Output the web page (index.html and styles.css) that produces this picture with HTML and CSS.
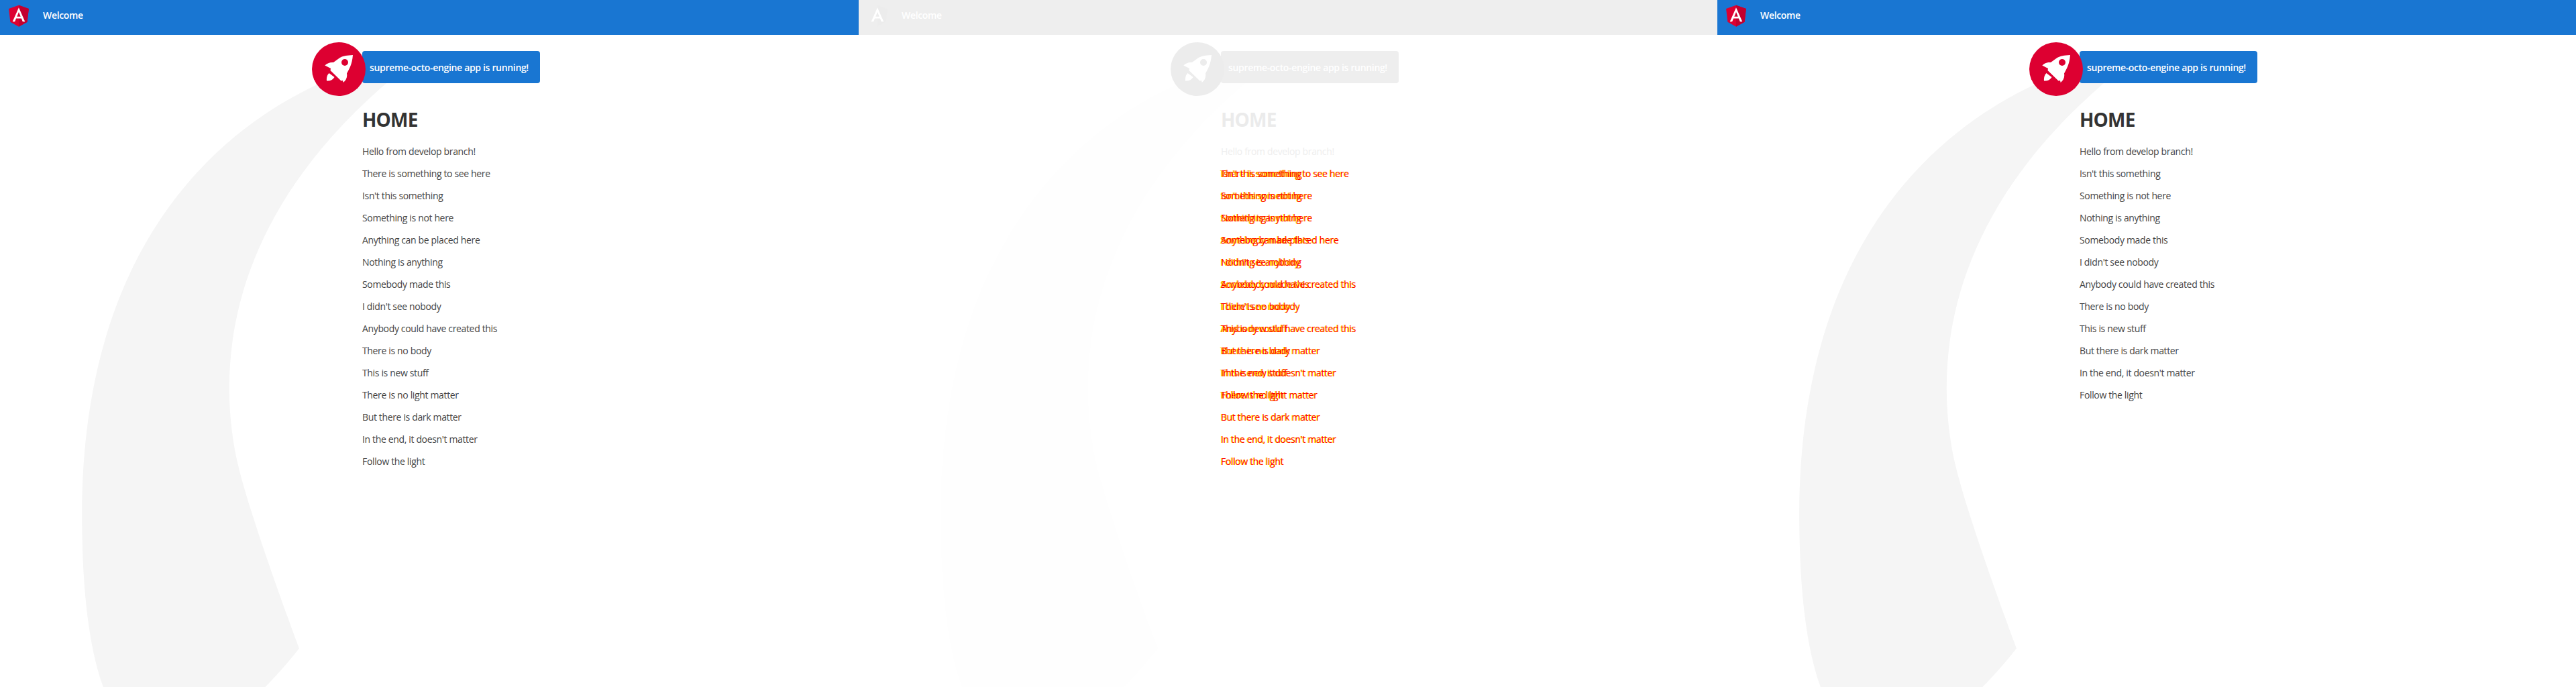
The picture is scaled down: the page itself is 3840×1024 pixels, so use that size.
FILE: index.html
```html
<!DOCTYPE html>
<html lang="en">
<head>
  <meta charset="UTF-8" />
  <title>Welcome</title>
  <link rel="stylesheet" href="styles.css">
</head>
<body>
  <svg class="defs" width="0" height="0">
    <defs>
      <g id="ng-logo">
        <polygon class="shield" points="125,30 31.9,63.2 46.1,186.3 125,230 203.9,186.3 218.1,63.2"/>
        <polygon class="shield-dark" points="125,30 125,230 203.9,186.3 218.1,63.2"/>
        <path class="logo-a" d="M125,52.1L66.8,182.6h21.7l11.7-29.2h49.4l11.7,29.2h21.7L125,52.1z M142,135.4H108l17-40.9L142,135.4z"/>
      </g>
      <path id="smoke" d="M644.6,141S143.02,215.537,147.049,870.207s342.774,201.755,342.774,201.755S404.659,847.213,388.815,762.2c-27.116-145.51-11.551-384.124,271.9-609.1C671.15,139.365,644.6,141,644.6,141Z" transform="translate(-147.025 -140.525)"/>
      <g id="rocket-ship">
        <circle class="rocket-bg" cx="40" cy="40" r="40"/>
        <path class="rocket-body" d="M61 19C52 19.500 46 20.500 41.700 23L32 30C27 29.500 23 31 19.300 34.500L28 39 27.500 42 43.500 57.500 46 57 46.700 60C51 56.500 53 52 52 46.500 55 41 60 33 61 19Z"/>
        <circle class="rocket-port" cx="49" cy="30" r="5"/>
        <path class="rocket-body" d="M22 57.500C21.500 52 23 48.500 25.500 46L33.500 52C31 56 27 58 22 57.500Z"/>
      </g>
    </defs>
  </svg>

  <div class="panes">
    <!-- expected -->
    <section class="pane">
      <svg class="smoke" viewBox="0 0 516.119 1083.632"><use href="#smoke"/></svg>
      <header class="toolbar">
        <svg class="logo" viewBox="0 0 250 250"><use href="#ng-logo"/></svg>
        <span>Welcome</span>
      </header>
      <main class="content">
        <div class="card">
          <svg class="rocket" viewBox="0 0 80 80"><use href="#rocket-ship"/></svg>
          <span>supreme-octo-engine app is running!</span>
        </div>
        <h2>HOME</h2>
        <p>Hello from develop branch!</p>
        <p>There is something to see here</p>
        <p>Isn't this something</p>
        <p>Something is not here</p>
        <p>Anything can be placed here</p>
        <p>Nothing is anything</p>
        <p>Somebody made this</p>
        <p>I didn't see nobody</p>
        <p>Anybody could have created this</p>
        <p>There is no body</p>
        <p>This is new stuff</p>
        <p>There is no light matter</p>
        <p>But there is dark matter</p>
        <p>In the end, it doesn't matter</p>
        <p>Follow the light</p>
      </main>
    </section>

    <!-- diff -->
    <section class="pane diff">
      <svg class="smoke" viewBox="0 0 516.119 1083.632"><use href="#smoke"/></svg>
      <header class="toolbar">
        <svg class="logo" viewBox="0 0 250 250"><use href="#ng-logo"/></svg>
        <span>Welcome</span>
      </header>
      <main class="content">
        <div class="card">
          <svg class="rocket" viewBox="0 0 80 80"><use href="#rocket-ship"/></svg>
          <span>supreme-octo-engine app is running!</span>
        </div>
        <h2>HOME</h2>
        <p>Hello from develop branch!</p>
        <p class="clash"><span>There is something to see here</span><span>Isn't this something</span></p>
        <p class="clash"><span>Isn't this something</span><span>Something is not here</span></p>
        <p class="clash"><span>Something is not here</span><span>Nothing is anything</span></p>
        <p class="clash"><span>Anything can be placed here</span><span>Somebody made this</span></p>
        <p class="clash"><span>Nothing is anything</span><span>I didn't see nobody</span></p>
        <p class="clash"><span>Somebody made this</span><span>Anybody could have created this</span></p>
        <p class="clash"><span>I didn't see nobody</span><span>There is no body</span></p>
        <p class="clash"><span>Anybody could have created this</span><span>This is new stuff</span></p>
        <p class="clash"><span>There is no body</span><span>But there is dark matter</span></p>
        <p class="clash"><span>This is new stuff</span><span>In the end, it doesn't matter</span></p>
        <p class="clash"><span>There is no light matter</span><span>Follow the light</span></p>
        <p class="clash"><span>But there is dark matter</span></p>
        <p class="clash"><span>In the end, it doesn't matter</span></p>
        <p class="clash"><span>Follow the light</span></p>
      </main>
    </section>

    <!-- actual -->
    <section class="pane">
      <svg class="smoke" viewBox="0 0 516.119 1083.632"><use href="#smoke"/></svg>
      <header class="toolbar">
        <svg class="logo" viewBox="0 0 250 250"><use href="#ng-logo"/></svg>
        <span>Welcome</span>
      </header>
      <main class="content">
        <div class="card">
          <svg class="rocket" viewBox="0 0 80 80"><use href="#rocket-ship"/></svg>
          <span>supreme-octo-engine app is running!</span>
        </div>
        <h2>HOME</h2>
        <p>Hello from develop branch!</p>
        <p>Isn't this something</p>
        <p>Something is not here</p>
        <p>Nothing is anything</p>
        <p>Somebody made this</p>
        <p>I didn't see nobody</p>
        <p>Anybody could have created this</p>
        <p>There is no body</p>
        <p>This is new stuff</p>
        <p>But there is dark matter</p>
        <p>In the end, it doesn't matter</p>
        <p>Follow the light</p>
      </main>
    </section>
  </div>
</body>
</html>
```

FILE: styles.css
```css
* {
  box-sizing: border-box;
}

body {
  margin: 0;
  font-family: "Open Sans", sans-serif;
  font-size: 14px;
  letter-spacing: -0.33px;
  color: #333;
  background: #fff;
}

.defs {
  position: absolute;
}

.panes {
  display: grid;
  grid-template-columns: repeat(3, 1280px);
  height: 1024px;
  overflow: hidden;
}

.pane {
  --shield: #dd0031;
  --shield-dark: #c3002f;
  --rocket: #dd0031;
  position: relative;
  height: 1024px;
  overflow: hidden;
  isolation: isolate;
}

.smoke {
  position: absolute;
  top: 86px;
  left: 122px;
  width: 488px;
  height: 1024px;
  z-index: -1;
  fill: #f5f5f5;
}

.toolbar {
  display: flex;
  align-items: flex-start;
  height: 52px;
  padding: 3px 0 0 8px;
  background: #1976d2;
  color: #fff;
  font-weight: 600;
}

.toolbar span {
  margin-top: 10px;
}

.logo {
  width: 40px;
  height: 40px;
  margin-right: 16px;
}

.shield {
  fill: var(--shield);
}

.shield-dark {
  fill: var(--shield-dark);
}

.logo-a {
  fill: #fff;
}

.content {
  padding: 24px 0 0 540px;
}

.card {
  position: relative;
  display: flex;
  align-items: center;
  width: 265px;
  height: 48px;
  padding-left: 11px;
  border-radius: 4px;
  background: #1976d2;
  color: #fff;
  font-weight: 600;
}

.rocket {
  position: absolute;
  top: -13px;
  left: -75px;
  width: 80px;
  height: 80px;
}

.rocket-bg,
.rocket-port {
  fill: var(--rocket);
}

.rocket-body {
  fill: #fff;
}

h2 {
  margin: 35px 0 19px;
  font-size: 28px;
  font-weight: 700;
  line-height: 38px;
  letter-spacing: -0.8px;
}

p {
  margin: 14px 0;
  color: #444;
  letter-spacing: -0.35px;
  line-height: 19px;
}

/* diff pane */
.diff {
  --shield: #eee;
  --shield-dark: #ececec;
  --rocket: #ececec;
  color: #eee;
}

.diff .smoke {
  fill: #fefefe;
}

.diff .toolbar,
.diff .card {
  background: #eee;
}

.diff h2 {
  color: #ebebeb;
}

.diff p {
  color: #eee;
}

.diff .clash span {
  grid-area: 1 / 1;
  color: #f00;
  text-shadow: -1px 0 0 #ff0;
}

.clash {
  display: grid;
}
```
